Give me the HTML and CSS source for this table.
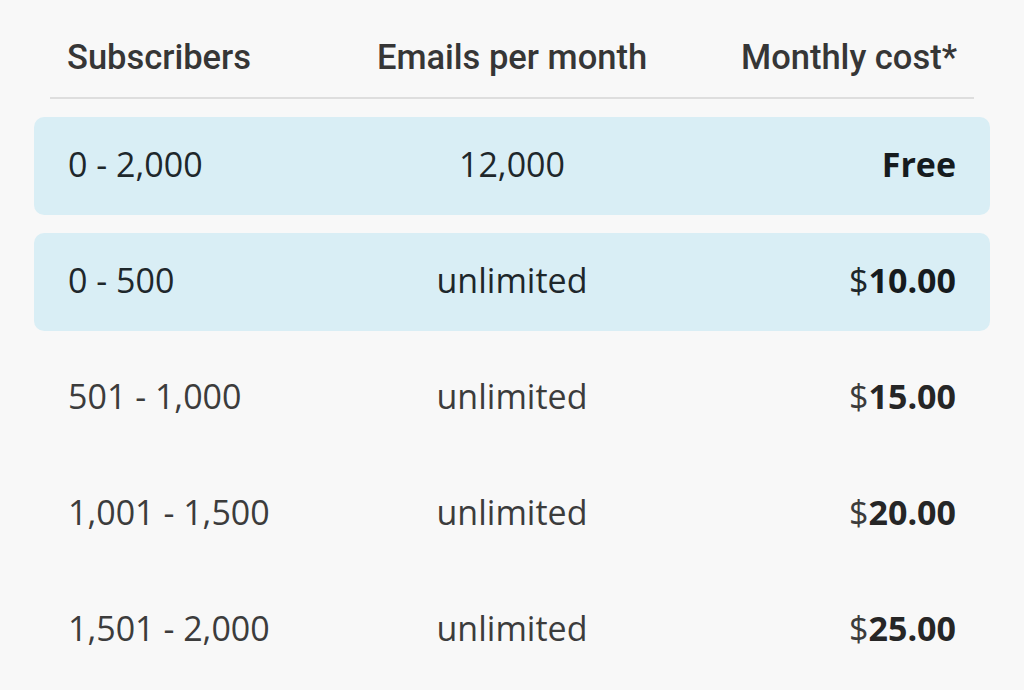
FILE: index.html
```html
<!DOCTYPE html>
<html lang="en">
<head>
<meta charset="utf-8">
<title>Pricing</title>
<link rel="stylesheet" href="styles.css">
</head>
<body>
<div class="pricing">
  <div class="head">
    <div class="c1">Subscribers</div>
    <div class="c2">Emails per month</div>
    <div class="c3">Monthly cost*</div>
  </div>
  <div class="rows">
    <div class="row hl">
      <div class="c1">0 - 2,000</div>
      <div class="c2">12,000</div>
      <div class="c3"><b>Free</b></div>
    </div>
    <div class="row hl">
      <div class="c1">0 - 500</div>
      <div class="c2">unlimited</div>
      <div class="c3">$<b>10.00</b></div>
    </div>
    <div class="row">
      <div class="c1">501 - 1,000</div>
      <div class="c2">unlimited</div>
      <div class="c3">$<b>15.00</b></div>
    </div>
    <div class="row">
      <div class="c1">1,001 - 1,500</div>
      <div class="c2">unlimited</div>
      <div class="c3">$<b>20.00</b></div>
    </div>
    <div class="row">
      <div class="c1">1,501 - 2,000</div>
      <div class="c2">unlimited</div>
      <div class="c3">$<b>25.00</b></div>
    </div>
  </div>
</div>
</body>
</html>
```
FILE: styles.css
```css
html, body {
  margin: 0;
  padding: 0;
  background: #f8f8f8;
}
.pricing {
  width: 1024px;
  height: 690px;
  overflow: hidden;
  padding: 0 34px 0 34px;
  box-sizing: border-box;
}
.head {
  display: grid;
  grid-template-columns: 1fr 1fr 1fr;
  align-items: center;
  margin: 0 16px;
  padding: 37px 17px 20px;
  border-bottom: 2px solid #dedede;
  font-family: Roboto, "Liberation Sans", sans-serif;
  font-weight: 500;
  font-size: 34.5px;
  line-height: 40px;
  color: #363636;
}
.rows {
  display: flex;
  flex-direction: column;
  gap: 18px;
  margin-top: 18px;
}
.row {
  display: grid;
  grid-template-columns: 1fr 1fr 1fr;
  align-items: center;
  height: 98px;
  padding: 0 34px 4px;
  box-sizing: border-box;
  border-radius: 10px;
  font-family: "Open Sans", "Liberation Sans", sans-serif;
  font-size: 34px;
  color: #3c3c3c;
}
.row.hl {
  background: #d9eef5;
  color: #1e272b;
}
.c1 { text-align: left; }
.c2 { text-align: center; }
.c3 { text-align: right; }
.row b {
  font-weight: 700;
  color: #262626;
}
.row.hl b { color: #161b1e; }
```
